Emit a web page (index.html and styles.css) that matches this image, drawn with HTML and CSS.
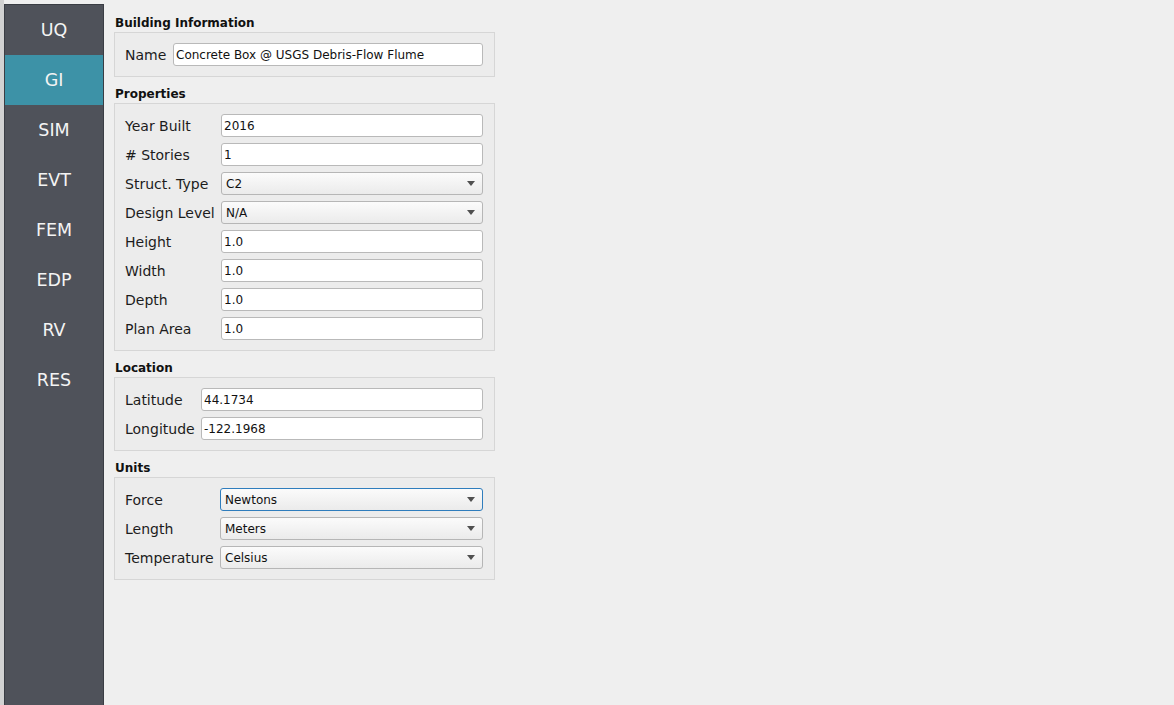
FILE: index.html
```html
<!DOCTYPE html>
<html>
<head>
<meta charset="utf-8">
<link rel="stylesheet" href="styles.css">
</head>
<body>
<div class="app">
  <div class="strip"></div>
  <nav class="sidebar">
    <div class="nav-item">UQ</div>
    <div class="nav-item active">GI</div>
    <div class="nav-item">SIM</div>
    <div class="nav-item">EVT</div>
    <div class="nav-item">FEM</div>
    <div class="nav-item">EDP</div>
    <div class="nav-item">RV</div>
    <div class="nav-item">RES</div>
  </nav>
  <main class="main">
    <div class="group-title">Building Information</div>
    <div class="group g-name">
      <label>Name</label>
      <input class="edit" value="Concrete Box @ USGS Debris-Flow Flume">
    </div>

    <div class="group-title">Properties</div>
    <div class="group g-props">
      <label>Year Built</label><input class="edit" value="2016">
      <label># Stories</label><input class="edit" value="1">
      <label>Struct. Type</label>
      <div class="combo"><span>C2</span><svg class="arrow" width="8" height="5" viewBox="0 0 8 5"><path d="M0 0h8L4 5z"/></svg></div>
      <label>Design Level</label>
      <div class="combo"><span>N/A</span><svg class="arrow" width="8" height="5" viewBox="0 0 8 5"><path d="M0 0h8L4 5z"/></svg></div>
      <label>Height</label><input class="edit" value="1.0">
      <label>Width</label><input class="edit" value="1.0">
      <label>Depth</label><input class="edit" value="1.0">
      <label>Plan Area</label><input class="edit" value="1.0">
    </div>

    <div class="group-title">Location</div>
    <div class="group g-loc">
      <label>Latitude</label><input class="edit" value="44.1734">
      <label>Longitude</label><input class="edit" value="-122.1968">
    </div>

    <div class="group-title">Units</div>
    <div class="group g-units">
      <label>Force</label>
      <div class="combo focus"><span>Newtons</span><svg class="arrow" width="8" height="5" viewBox="0 0 8 5"><path d="M0 0h8L4 5z"/></svg></div>
      <label>Length</label>
      <div class="combo"><span>Meters</span><svg class="arrow" width="8" height="5" viewBox="0 0 8 5"><path d="M0 0h8L4 5z"/></svg></div>
      <label>Temperature</label>
      <div class="combo"><span>Celsius</span><svg class="arrow" width="8" height="5" viewBox="0 0 8 5"><path d="M0 0h8L4 5z"/></svg></div>
    </div>
  </main>
</div>
</body>
</html>
```
FILE: styles.css
```css
html, body {
  margin: 0;
  padding: 0;
  height: 100%;
  overflow: hidden;
  background: #efefef;
  font-family: "DejaVu Sans", "Liberation Sans", sans-serif;
  color: #1a1a1a;
}

.app {
  display: flex;
  height: 705px;
}

.strip {
  width: 4px;
  background: #d2d2d2;
  flex: none;
}

.sidebar {
  flex: none;
  width: 98px;
  margin-top: 4px;
  background: #4f525a;
  border: 1px solid #3a3d44;
  border-bottom: none;
  display: flex;
  flex-direction: column;
}

.nav-item {
  height: 50px;
  display: flex;
  align-items: center;
  justify-content: center;
  color: #f4f4f4;
  font-size: 17.5px;
}

.nav-item.active {
  background: #3d92a7;
}

.main {
  padding: 6px 0 0 10px;
  width: 381px;
}

.group-title {
  font-size: 12px;
  font-weight: bold;
  line-height: 15px;
  padding: 10px 0 1px 1px;
  color: #111;
}

.group {
  border: 1px solid #d6d6d6;
  background: #ececec;
  padding: 10px 11px 10px 10px;
  display: grid;
  row-gap: 6px;
  column-gap: 0;
  align-items: center;
}

.g-name { grid-template-columns: 48px 1fr; }
.g-props { grid-template-columns: 96px 1fr; }
.g-loc { grid-template-columns: 76px 1fr; }
.g-units { grid-template-columns: 95px 1fr; }

.group label {
  font-size: 14px;
  color: #1c1c1c;
  white-space: nowrap;
}

.edit {
  box-sizing: border-box;
  height: 23px;
  width: 100%;
  margin: 0;
  border: 1px solid #b9b9b9;
  border-radius: 3px;
  background: #ffffff;
  padding: 0 2px;
  font-family: "DejaVu Sans", "Liberation Sans", sans-serif;
  font-size: 12px;
  color: #111;
  outline: none;
}

.combo {
  box-sizing: border-box;
  height: 23px;
  border: 1px solid #b6b6b6;
  border-radius: 3px;
  background: linear-gradient(#fbfbfb, #ebebeb);
  padding: 0 7px 0 4px;
  display: flex;
  align-items: center;
  justify-content: space-between;
  font-size: 12px;
  color: #111;
}

.combo.focus {
  border-color: #2f7dbd;
}

.arrow {
  fill: #505050;
}
```
